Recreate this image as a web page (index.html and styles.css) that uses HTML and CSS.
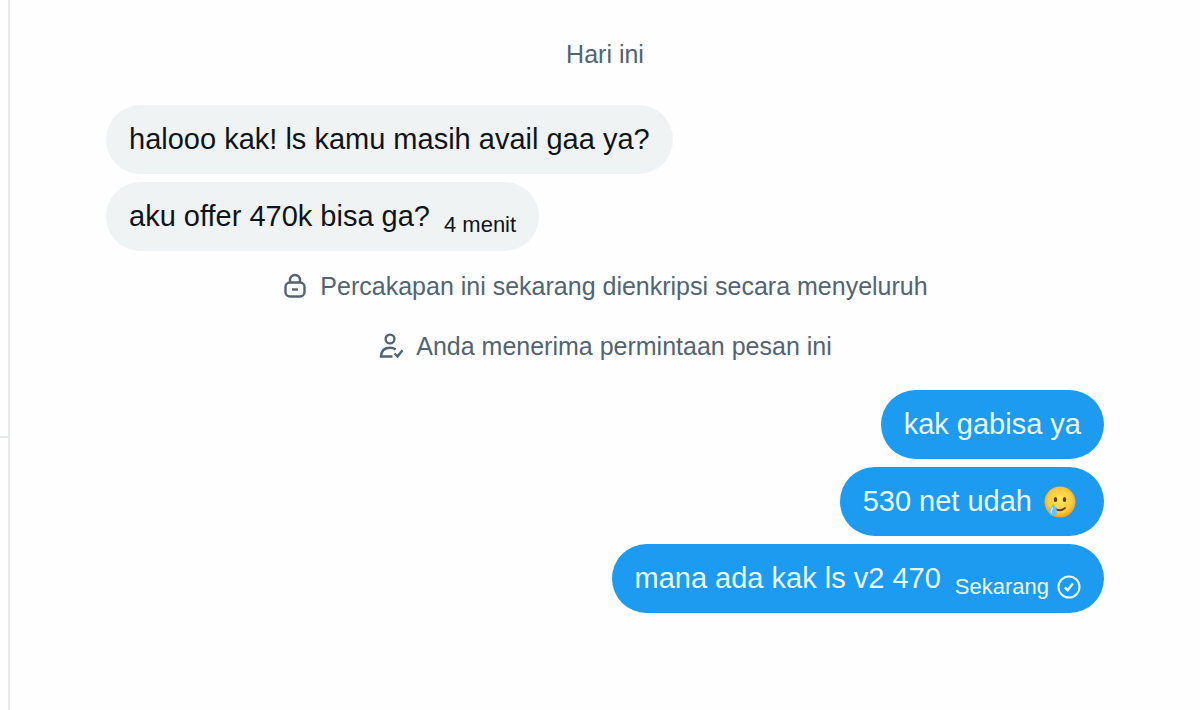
FILE: index.html
```html
<!DOCTYPE html>
<html lang="id">
<head>
    <meta charset="UTF-8">
    <meta name="viewport" content="width=device-width, initial-scale=1.0">
    <title>Pesan</title>
    <link rel="stylesheet" href="styles.css">
</head>
<body>
    <div class="sidebar">
        <div class="sidebar-item"></div>
    </div>
    <main class="chat">
        <div class="date">Hari ini</div>

        <div class="messages received">
            <div class="bubble">halooo kak! ls kamu masih avail gaa ya?</div>
            <div class="bubble">
                <span>aku offer 470k bisa ga?</span>
                <span class="time">4 menit</span>
            </div>
        </div>

        <div class="notices">
            <div class="notice">
                <svg class="icon" viewBox="0 0 26 26" fill="none" stroke="currentColor" stroke-width="2.4">
                    <path d="M8 10V7a5 5 0 0 1 10 0v3"/>
                    <rect x="3.5" y="9.5" width="19" height="14" rx="4.5"/>
                    <path d="M10 16.5h6"/>
                </svg>
                <span>Percakapan ini sekarang dienkripsi secara menyeluruh</span>
            </div>
            <div class="notice">
                <svg class="icon" viewBox="0 0 26 26" fill="none" stroke="currentColor" stroke-width="2.4">
                    <circle cx="12" cy="6" r="4.4"/>
                    <path d="M14.5 23.5H3c.2-5.500 3.500-8.700 9-8.700 2.300 0 4.200.6 5.600 1.700"/>
                    <path d="M16.5 20.500l3 3 5-6.300"/>
                </svg>
                <span>Anda menerima permintaan pesan ini</span>
            </div>
        </div>

        <div class="messages sent">
            <div class="bubble">kak gabisa ya</div>
            <div class="bubble">
                <span>530 net udah</span>
                <svg class="emoji" viewBox="0 0 32 32" role="img" aria-label="Wajah tersenyum dengan air mata">
                    <defs>
                        <radialGradient id="face" cx="50%" cy="45%" r="55%">
                            <stop offset="0" stop-color="#ffe45c"/>
                            <stop offset="0.7" stop-color="#fdcb3b"/>
                            <stop offset="1" stop-color="#ee9c2b"/>
                        </radialGradient>
                    </defs>
                    <circle cx="16" cy="16" r="15.5" fill="url(#face)"/>
                    <ellipse cx="11.5" cy="13.5" rx="1.7" ry="2.6" fill="#5f3a12"/>
                    <ellipse cx="20.5" cy="13.5" rx="1.7" ry="2.6" fill="#5f3a12"/>
                    <path d="M11 22.5q5 3.800 10-.5" fill="none" stroke="#6b3d12" stroke-width="1.8" stroke-linecap="round"/>
                    <path d="M9.5 18c1.800 3 3.500 5 3.500 7.500a4 4 0 0 1-8 0c0-2.500 3-4.500 4.500-7.500z" fill="#62c5f5"/>
                    <path d="M8.5 22q-2 2.500-1 4.500" fill="none" stroke="#c9f0ff" stroke-width="1.3" stroke-linecap="round"/>
                </svg>
            </div>
            <div class="bubble">
                <span>mana ada kak ls v2 470</span>
                <span class="time">
                    Sekarang
                    <svg class="status" viewBox="0 0 24 24" fill="none" stroke="currentColor" stroke-width="2">
                        <circle cx="12" cy="12" r="10.5"/>
                        <path d="M7.800 12.300l2.900 2.900 5.200-6.700" stroke-width="2.4"/>
                    </svg>
                </span>
            </div>
        </div>
    </main>
</body>
</html>
```
FILE: styles.css
```css
* {
    box-sizing: border-box;
}

body {
    display: flex;
    min-height: 100vh;
    margin: 0;
    background-color: #fefefe;
    font-family: "Liberation Sans", Arial, sans-serif;
}

.sidebar {
    width: 10px;
    border-right: 2px solid #e6e9ec;
}

.sidebar-item {
    height: 438px;
    border-bottom: 2px solid #e6e9ec;
}

.chat {
    flex: 1;
    display: flex;
    flex-direction: column;
    padding: 38px 96px;
}

.date {
    margin-bottom: 35px;
    text-align: center;
    font-size: 25px;
    line-height: 32px;
    color: #536471;
}

.messages {
    display: flex;
    flex-direction: column;
    gap: 8px;
}

.received {
    align-items: flex-start;
}

.sent {
    align-items: flex-end;
}

.bubble {
    display: flex;
    align-items: center;
    padding: 12px 23px;
    border-radius: 35px;
    font-size: 29px;
    line-height: 45px;
}

.received .bubble {
    background-color: #eff3f4;
    color: #0f1419;
}

.sent .bubble {
    background-color: #1d9bf0;
    color: #e8f8ff;
}

.time {
    display: flex;
    align-items: center;
    align-self: flex-end;
    gap: 8px;
    margin-left: 14px;
    font-size: 22px;
    line-height: 28px;
}

.notices {
    display: flex;
    flex-direction: column;
    align-items: center;
    gap: 28px;
    margin: 19px 0 28px;
}

.notice {
    display: flex;
    align-items: center;
    gap: 12px;
    font-size: 25px;
    line-height: 32px;
    color: #536471;
}

.icon {
    width: 26px;
    height: 26px;
}

.emoji {
    width: 32px;
    height: 32px;
    margin: 0 5px 0 12px;
}

.status {
    width: 24px;
    height: 24px;
}
```
